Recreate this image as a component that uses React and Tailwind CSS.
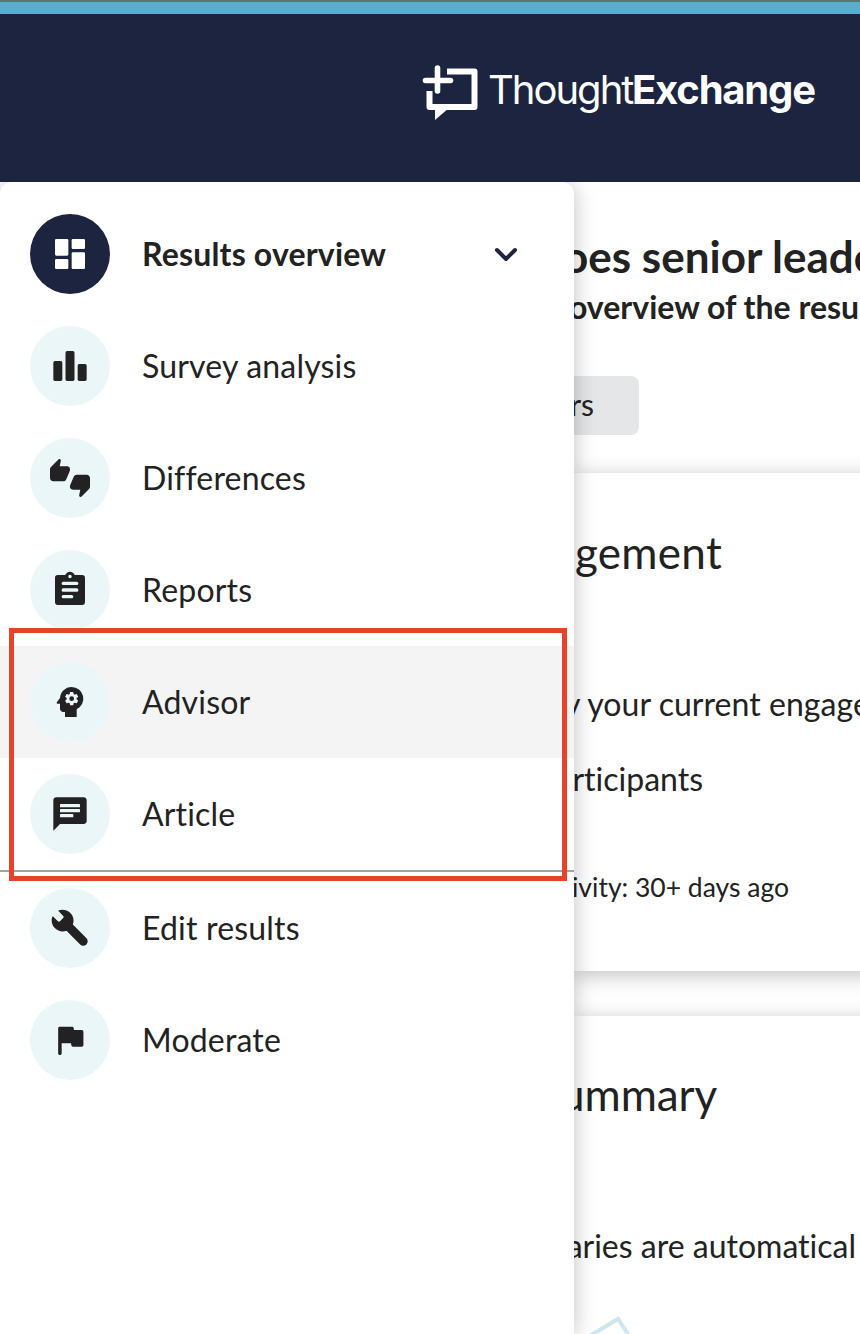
import React from "react";
import { MdPsychology } from "react-icons/md";

const DashboardIcon = () => (
  <svg className="w-10 h-10" viewBox="0 0 24 24" fill="currentColor">
    <rect x="3" y="3" width="8" height="10" rx="0.7" />
    <rect x="13" y="3" width="8" height="6" rx="0.7" />
    <rect x="3" y="15" width="8" height="6" rx="0.7" />
    <rect x="13" y="11" width="8" height="10" rx="0.7" />
  </svg>
);

const BarsIcon = () => (
  <svg className="w-10 h-10" viewBox="0 0 24 24" fill="currentColor">
    <rect x="2" y="9" width="5.4" height="12" rx="1" />
    <rect x="9.3" y="3" width="5.4" height="18" rx="1" />
    <rect x="16.6" y="10.8" width="5.4" height="10.2" rx="1" />
  </svg>
);

const ThumbsIcon = () => (
  <svg className="w-10 h-10" viewBox="0 0 24 24" fill="currentColor">
    <path d="M10.2 5H5.82l.66-3.18c.1-.5-.05-.8-.35-1.05-.35-.25-.75-.2-1.05.1L.58 5.36C.2 5.74 0 6.2 0 6.8V12c0 1.1.9 2 2 2h5.9c.8 0 1.5-.45 1.8-1.15l2.1-4.9C12.5 6.3 11.6 5 10.2 5z" />
    <path d="M22 10h-5.9c-.8 0-1.5.45-1.8 1.15l-2.1 4.9C11.5 17.7 12.4 19 13.8 19h4.38l-.66 3.18c-.1.5.05.8.35 1.05.35.25.75.2 1.05-.1l4.5-4.49c.38-.38.58-.84.58-1.44V12c0-1.1-.9-2-2-2z" />
  </svg>
);

const ReportIcon = () => (
  <svg className="w-10 h-10" viewBox="0 0 24 24" fill="currentColor">
    <path
      fillRule="evenodd"
      d="M19.4 3h-4.6C14.4 1.8 13.3 1 12 1s-2.4.8-2.8 2H4.6C3.7 3 3 3.7 3 4.6v14.8c0 .9.7 1.6 1.6 1.6h14.8c.9 0 1.6-.7 1.6-1.6V4.6C21 3.7 20.3 3 19.4 3zM12 2.9c.6 0 1 .45 1 1s-.4 1-1 1-1-.45-1-1 .4-1 1-1z"
    />
    <g className="fill-[#eaf6f8]">
      <rect x="7" y="7" width="10" height="2" rx="0.9" />
      <rect x="7" y="11" width="10" height="2" rx="0.9" />
      <rect x="7" y="15" width="7" height="2" rx="0.9" />
    </g>
  </svg>
);

const ChatIcon = () => (
  <svg className="w-10 h-10" viewBox="0 0 24 24" fill="currentColor">
    <path d="M20.2 2H3.8C2.8 2 2 2.8 2 3.8V22l4-4h14.2c1 0 1.8-.8 1.8-1.8V3.8c0-1-.8-1.8-1.8-1.8z" />
    <g className="fill-[#eaf6f8]">
      <rect x="6" y="6" width="12" height="2" rx="0.4" />
      <rect x="6" y="9" width="12" height="2" rx="0.4" />
      <rect x="6" y="12" width="8" height="2" rx="0.4" />
    </g>
  </svg>
);

const WrenchIcon = () => (
  <svg className="w-10 h-10" viewBox="0 0 24 24" fill="currentColor">
    <path d="M21.9 18.2l-8.2-8.3c.9-2.3.4-5-1.5-6.9C10.3 1.1 7.6.6 5.4 1.3c-.4.1-.5.4-.2.7l2.6 2.6c.5.5.5 1 .1 1.4L6 7.9c-.4.4-.9.4-1.4-.1L2 5.2c-.3-.3-.6-.2-.7.2-.7 2.2-.2 4.9 1.7 6.8 1.9 1.9 4.6 2.3 6.9 1.4l8.2 8.3c1 1 2.6 1 3.6.1l.2-.2c1-1 1-2.6 0-3.6z" />
  </svg>
);

const FlagIcon = () => (
  <svg className="w-10 h-10" viewBox="0 0 24 24" fill="currentColor">
    <path d="M14.4 6l-.25-1.3c-.1-.45-.45-.7-.9-.7H5.8c-.5 0-.9.4-.9.9v15.2c0 .5.4.9 1 .9s1.1-.4 1.1-.9V14h5.6l.25 1.3c.1.45.45.7.9.7h5.3c.55 0 1-.45 1-1V7c0-.55-.45-1-1-1z" />
  </svg>
);

const mainItems = [
  { label: "Results overview", icon: <DashboardIcon />, active: true },
  { label: "Survey analysis", icon: <BarsIcon /> },
  { label: "Differences", icon: <ThumbsIcon /> },
  { label: "Reports", icon: <ReportIcon /> },
  { label: "Advisor", icon: <MdPsychology className="w-10 h-10" />, hovered: true },
  { label: "Article", icon: <ChatIcon /> },
];

const adminItems = [
  { label: "Edit results", icon: <WrenchIcon /> },
  { label: "Moderate", icon: <FlagIcon /> },
];

function NavItem({ item }) {
  return (
    <button className={`flex items-center w-full h-28 pl-[30px] pr-[50px] text-left ${item.hovered ? "bg-[#f4f4f4]" : ""}`}>
      <span className={`flex items-center justify-center w-20 h-20 rounded-full shrink-0 ${item.active ? "bg-[#1c2440] text-white" : "bg-[#eaf6f8]"}`}>{item.icon}</span>
      <span className={`ml-8 flex-1 text-[32px] leading-10 tracking-[0.18px] ${item.active ? "font-bold" : ""}`}>{item.label}</span>
      {item.active && (
        <svg className="w-9 h-9 text-[#1c2440]" viewBox="0 0 36 36" fill="none" stroke="currentColor" strokeWidth="4" strokeLinecap="round" strokeLinejoin="round">
          <path d="M9 14l9 9 9-9" />
        </svg>
      )}
    </button>
  );
}

function Logo() {
  return (
    <div className="flex items-start text-white">
      <svg className="w-[58px] h-[58px]" viewBox="0 0 58 58" fill="none" stroke="currentColor" strokeWidth="6" strokeLinecap="round" strokeLinejoin="round">
        <path d="M16.5 4v23M4.5 16.5h25" strokeWidth="5.6" />
        <path d="M26 7.5h27.5V43H8.5V27" strokeLinecap="butt" />
        <path d="M14 44h14L14 56z" fill="currentColor" stroke="none" />
      </svg>
      <div className="ml-[9px] mt-0.5 flex font-[Inter,sans-serif] text-[40px] leading-[48px]">
        <span className="w-[144px] font-normal tracking-[-2px]">Thought</span>
        <span className="font-bold tracking-[-1.2px]">Exchange</span>
      </div>
    </div>
  );
}

function App() {
  return (
    <div className="w-[860px] h-[1334px] overflow-hidden bg-white text-[#222222] font-[Lato,sans-serif] [font-variant-ligatures:none]">
      <div className="h-3.5 bg-[#5badcf] border-t-2 border-[#5d7672]" />
      <header className="h-[168px] bg-[#1c2440] pl-[421px] pt-[50px]">
        <Logo />
      </header>

      <div className="flex h-[1152px]">
        {/* Side navigation */}
        <aside className="relative z-10 w-[574px] shrink-0 pt-4 bg-white rounded-t-xl shadow-[0_2px_22px_rgba(0,0,0,0.25)] [clip-path:inset(0_-30px_0_0)]">
          {mainItems.map((item) => (
            <NavItem key={item.label} item={item} />
          ))}
          <div className="h-0.5 bg-[#a2a2a5]" />
          {adminItems.map((item) => (
            <NavItem key={item.label} item={item} />
          ))}
          {/* Highlight frame over Advisor and Article */}
          <div className="absolute left-[9px] top-[446px] w-[558px] h-[253px] border-[5px] border-[#e5432a]" />
        </aside>

        {/* Page content, partly covered by the navigation */}
        <main className="flex-1 min-w-0 whitespace-nowrap">
          <div className="h-[291px] pt-12">
            <h1 className="-ml-[11px] text-[44px] leading-[52px] font-bold">oes senior leade</h1>
            <h2 className="-ml-[5px] text-[32px] leading-10 mt-[5px] font-bold">overview of the resu</h2>
            <div className="mt-[49px] w-[65px] h-[59px] rounded-r-lg bg-[#e5e6e8] flex justify-end items-center pr-[45px] pb-0.5 text-[30px]">rs</div>
          </div>

          <section className="-mr-10 h-[498px] pt-[53px] bg-white shadow-[0_4px_20px_rgba(0,0,0,0.25)]">
            <div className="flex w-[148px] justify-end text-[44px] leading-[52px] tracking-[0.3px]">gement</div>
            <div className="-ml-2.5 mt-[106px] text-[32px] leading-10 tracking-[0.05px]">y your current engage</div>
            <div className="flex w-[129px] justify-end mt-[35px] text-[32px] leading-10">rticipants</div>
            <div className="flex w-[215px] justify-end mt-[70px] text-[26.5px] leading-9">ivity: 30+ days ago</div>
          </section>

          <section className="-mr-10 mt-[45px] h-[420px] pt-[52px] bg-white shadow-[0_4px_20px_rgba(0,0,0,0.25)]">
            <div className="flex w-[143px] justify-end text-[44px] leading-[52px] -tracking-[0.1px]">ummary</div>
            <div className="flex w-[282px] justify-end mt-[106px] text-[32px] leading-10">aries are automatical</div>
            <svg className="mt-[49px] ml-3 w-14 h-14" viewBox="0 0 56 56" fill="none" stroke="#cfe6ee" strokeWidth="4">
              <path d="M2 22L32 4l16 24" />
            </svg>
          </section>
        </main>
      </div>
    </div>
  );
}

export default App;
